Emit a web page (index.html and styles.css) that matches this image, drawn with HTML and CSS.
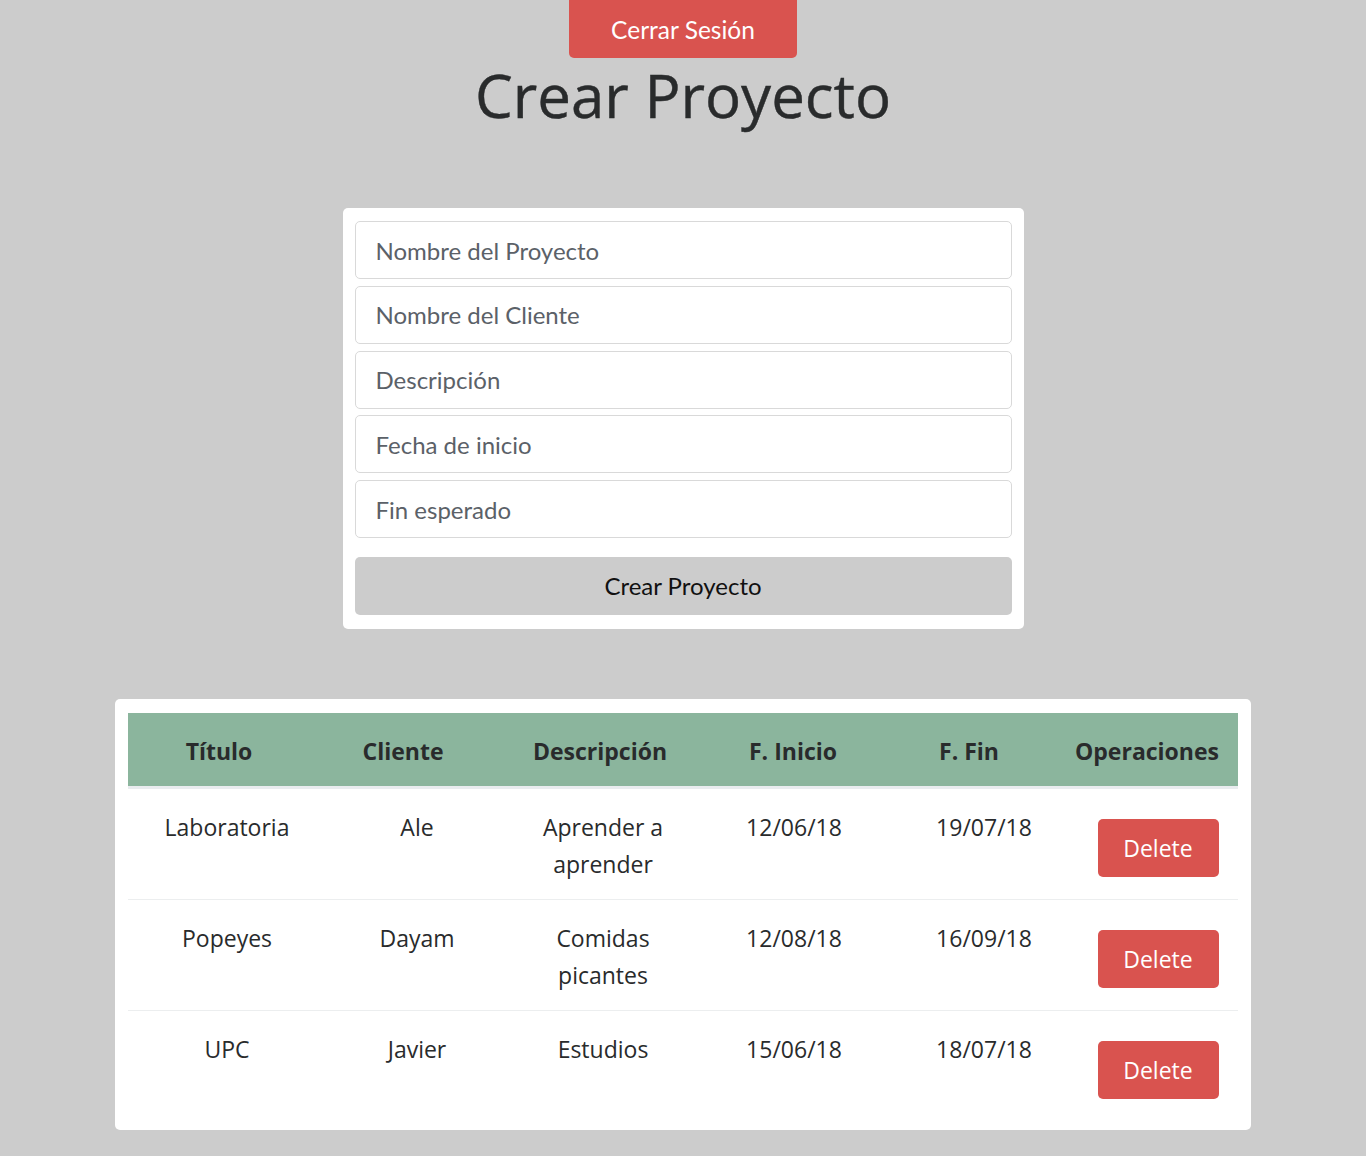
FILE: index.html
```html
<!DOCTYPE html>
<html lang="es">
<head>
<meta charset="utf-8">
<title>Crear Proyecto</title>
<link rel="stylesheet" href="styles.css">
</head>
<body>
<div class="top">
  <button class="btn-logout">Cerrar Sesión</button>
</div>
<h1 class="title">Crear Proyecto</h1>
<div class="form-card">
  <div class="field">Nombre del Proyecto</div>
  <div class="field">Nombre del Cliente</div>
  <div class="field">Descripción</div>
  <div class="field">Fecha de inicio</div>
  <div class="field">Fin esperado</div>
  <button class="btn-create">Crear Proyecto</button>
</div>
<div class="table-card">
  <div class="thead">
    <div>Título</div>
    <div>Cliente</div>
    <div>Descripción</div>
    <div>F. Inicio</div>
    <div>F. Fin</div>
    <div>Operaciones</div>
  </div>
  <div class="row">
    <div>Laboratoria</div>
    <div>Ale</div>
    <div>Aprender a<br>aprender</div>
    <div>12/06/18</div>
    <div>19/07/18</div>
    <div><button class="btn-del">Delete</button></div>
  </div>
  <div class="row">
    <div>Popeyes</div>
    <div>Dayam</div>
    <div>Comidas<br>picantes</div>
    <div>12/08/18</div>
    <div>16/09/18</div>
    <div><button class="btn-del">Delete</button></div>
  </div>
  <div class="row last">
    <div>UPC</div>
    <div>Javier</div>
    <div>Estudios</div>
    <div>15/06/18</div>
    <div>18/07/18</div>
    <div><button class="btn-del">Delete</button></div>
  </div>
</div>
</body>
</html>
```

FILE: styles.css
```css
html, body {
  margin: 0;
  padding: 0;
}
body {
  background: #cccccc;
  font-family: "Open Sans", "Noto Sans", sans-serif;
  color: #292b2c;
  padding-bottom: 40px;
}
.top {
  display: flex;
  justify-content: center;
}
.btn-logout {
  width: 228px;
  height: 58px;
  background: #d9534f;
  color: #fff;
  border: none;
  border-radius: 0 0 5px 5px;
  font-family: "Lato", sans-serif;
  font-size: 24.5px;
  padding: 0;
}
.title {
  margin: 0;
  text-align: center;
  font-size: 60px;
  font-weight: 400;
  line-height: 74px;
  height: 150px;
  color: #292b2c;
  -webkit-text-stroke: 0.4px #292b2c;
}
.form-card {
  width: 657px;
  margin: 0 auto;
  background: #fff;
  border-radius: 5px;
  padding: 13px 12px 14px;
  display: flex;
  flex-direction: column;
  gap: 6.75px;
}
.field {
  height: 56px;
  border: 1px solid #d9d9d9;
  border-radius: 5px;
  display: flex;
  align-items: center;
  padding-left: 20px;
  font-family: "Lato", sans-serif;
  font-size: 24px;
  color: #5b6168;
}
.btn-create {
  margin-top: 12px;
  height: 58px;
  background: #cccccc;
  border: none;
  border-radius: 5px;
  font-family: "Lato", sans-serif;
  font-size: 24px;
  color: #111;
}
.table-card {
  width: 1110px;
  margin: 70px auto 0;
  background: #fff;
  border-radius: 5px;
  padding: 14px 13px 13px;
}
.thead {
  display: grid;
  grid-template-columns: 182px 186px 208px 178px 174px 182px;
  height: 76px;
  padding-top: 4px;
  box-sizing: border-box;
  align-items: center;
  background: #8bb59d;
  border-bottom: 3px solid #e9ecef;
  font-weight: 700;
  font-size: 23px;
  text-align: center;
  color: #292b2c;
}
.row {
  display: grid;
  grid-template-columns: 198px 182px 190px 192px 188px 160px;
  height: 110px;
  border-bottom: 1px solid #eceeef;
  text-align: center;
  font-size: 23px;
  line-height: 37px;
  color: #292b2c;
}
.row > div {
  padding-top: 20px;
}
.row.last {
  border-bottom: none;
  height: 106px;
}
.btn-del {
  width: 121px;
  height: 58px;
  margin-top: 10px;
  background: #d9534f;
  color: #fff;
  border: none;
  border-radius: 5px;
  font-family: "Open Sans", sans-serif;
  font-size: 23px;
  padding: 0;
}
```
